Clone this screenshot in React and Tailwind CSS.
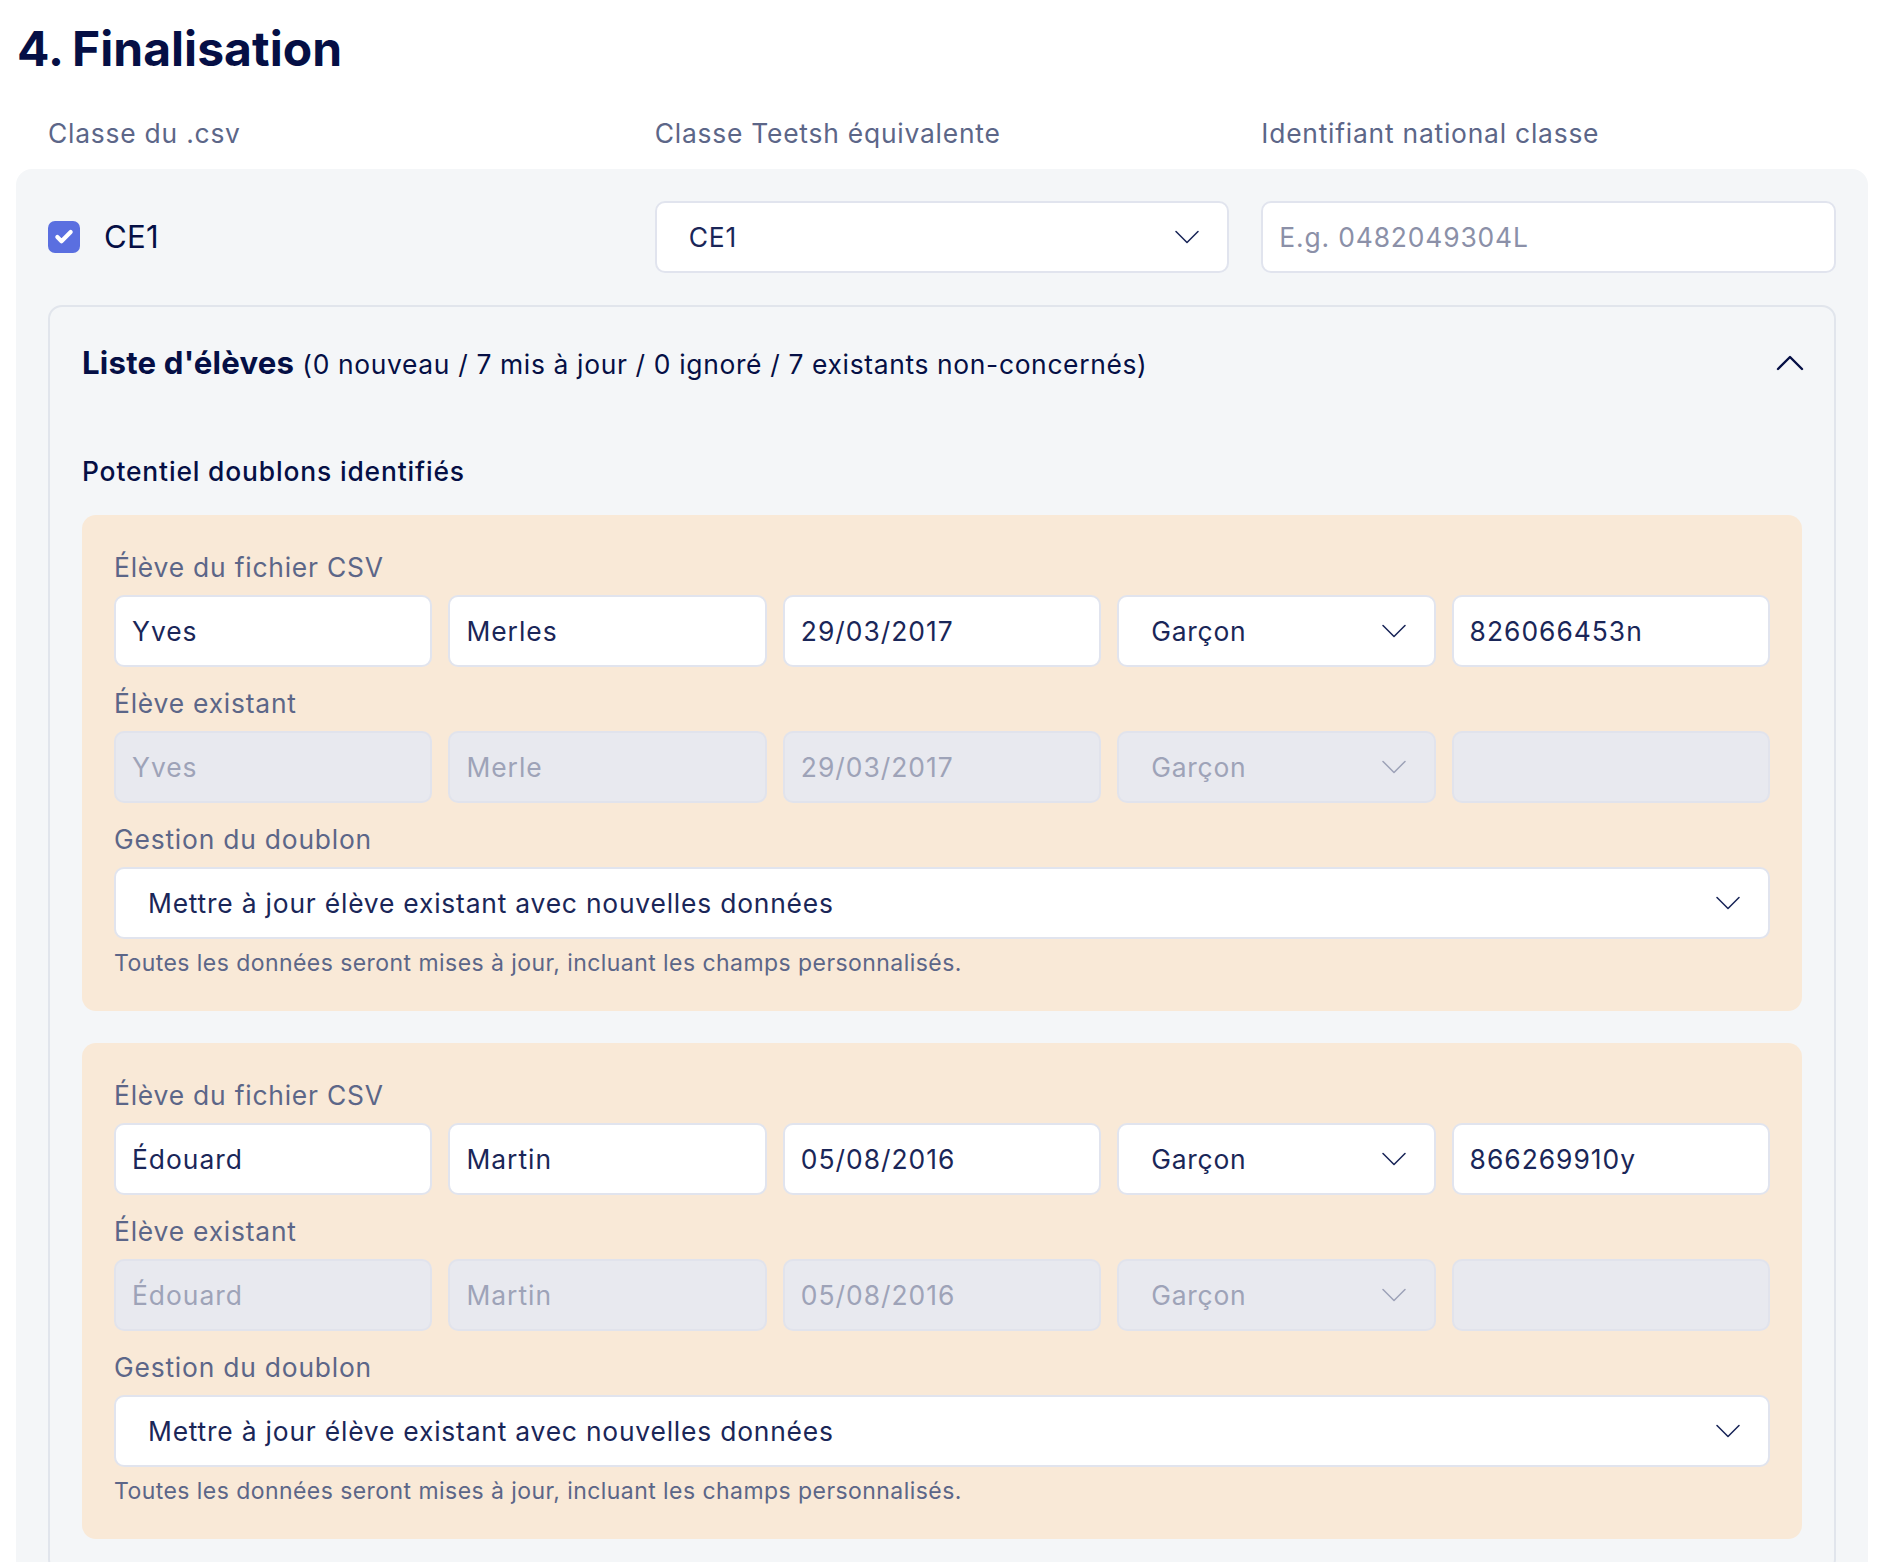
import { Check, ChevronDown, ChevronUp } from 'lucide-react';

const DOUBLONS = [
  {
    csv: ['Yves', 'Merles', '29/03/2017', 'Garçon', '826066453n'],
    existing: ['Yves', 'Merle', '29/03/2017', 'Garçon', ''],
  },
  {
    csv: ['Édouard', 'Martin', '05/08/2016', 'Garçon', '866269910y'],
    existing: ['Édouard', 'Martin', '05/08/2016', 'Garçon', ''],
  },
];

const ACTION = 'Mettre à jour élève existant avec nouvelles données';

function Label({ children }) {
  return <div className="mb-[8px] h-[40px] text-[26.4px] leading-[40px] tracking-[0.8px] text-[#5c6688]">{children}</div>;
}

function Field({ value, placeholder, disabled }) {
  return (
    <input
      readOnly
      disabled={disabled}
      value={value}
      placeholder={placeholder}
      className={
        'h-[72px] w-full min-w-0 rounded-[10px] border-2 px-[16px] text-[26.4px] tracking-[1px] outline-none placeholder:tracking-[0.85px] placeholder:text-[#8b90a8] ' +
        (disabled
          ? 'border-[#e1e3ec] bg-[#e8e9ef] text-[#9ea3b8]'
          : 'border-[#e1e4ee] bg-white text-[#1a2658]')
      }
    />
  );
}

function SelectBox({ value, disabled }) {
  return (
    <div className="relative">
      <select
        disabled={disabled}
        defaultValue={value}
        className={
          'h-[72px] w-full appearance-none rounded-[10px] border-2 pl-[32px] pr-[64px] pt-[2px] text-[26.4px] tracking-[0.8px] opacity-100 outline-none ' +
          (disabled
            ? 'border-[#e1e3ec] bg-[#e8e9ef] text-[#9ea3b8]'
            : 'border-[#e1e4ee] bg-white text-[#1a2658]')
        }
      >
        <option>{value}</option>
      </select>
      <ChevronDown
        strokeWidth={0.85}
        className={
          'pointer-events-none absolute right-[20px] top-1/2 h-[44px] w-[44px] -translate-y-1/2 ' +
          (disabled ? 'text-[#9ea3b8]' : 'text-[#1a2658]')
        }
      />
    </div>
  );
}

function FieldRow({ values, disabled }) {
  return (
    <div className="mb-[16px] grid grid-cols-5 gap-[16px]">
      <Field value={values[0]} disabled={disabled} />
      <Field value={values[1]} disabled={disabled} />
      <Field value={values[2]} disabled={disabled} />
      <SelectBox value={values[3]} disabled={disabled} />
      <Field value={values[4]} disabled={disabled} />
    </div>
  );
}

function DoublonCard({ doublon }) {
  return (
    <div className="mb-[32px] rounded-[14px] bg-[#f9e9d7] p-[32px]">
      <Label>Élève du fichier CSV</Label>
      <FieldRow values={doublon.csv} />
      <Label>Élève existant</Label>
      <FieldRow values={doublon.existing} disabled />
      <Label>Gestion du doublon</Label>
      <SelectBox value={ACTION} />
      <p className="mt-[8px] h-[32px] text-[23px] leading-[32px] tracking-[0.44px] text-[#5c6688]">
        Toutes les données seront mises à jour, incluant les champs personnalisés.
      </p>
    </div>
  );
}

export default function App() {
  return (
    <div className="h-[1562px] overflow-hidden bg-white font-['Inter',sans-serif] text-[#050f45]">
      <h1 className="flex h-[96px] items-center pl-[17px] pt-[2px] text-[48px] font-bold leading-none tracking-[0.05px] [word-spacing:-2px]">
        4. Finalisation
      </h1>

      <div className="mt-[17px] grid grid-cols-3 gap-[32px] px-[48px] text-[26.4px] leading-[40px] tracking-[0.78px] text-[#5c6688]">
        <div>Classe du .csv</div>
        <div>Classe Teetsh équivalente</div>
        <div>Identifiant national classe</div>
      </div>

      <div className="mx-[16px] mt-[16px] rounded-[16px] bg-[#f4f6f8] p-[32px]">
        <div className="grid grid-cols-3 items-center gap-[32px]">
          <label className="flex items-center gap-[24px] text-[31.2px] tracking-[0.2px]">
            <span className="flex h-[32px] w-[32px] items-center justify-center rounded-[7px] bg-[#5a6fe0]">
              <Check strokeWidth={5} className="h-[20px] w-[20px] text-white" />
            </span>
            CE1
          </label>
          <SelectBox value="CE1" />
          <Field value="" placeholder="E.g. 0482049304L" />
        </div>

        <div className="mt-[32px] rounded-[14px] border-2 border-[#e1e5ec] px-[32px]">
          <div className="flex h-[115px] items-center justify-between pb-[2px]">
            <p className="text-[26.4px] tracking-[0.66px] text-[#050f45]">
              <span className="text-[31.2px] font-bold tracking-[0.2px]">Liste d'élèves</span> (0 nouveau / 7 mis à jour / 0 ignoré / 7
              existants non-concernés)
            </p>
            <ChevronUp strokeWidth={1.2} className="mr-[-12px] mt-[-2px] h-[48px] w-[48px]" />
          </div>
          <h2 className="mt-[29px] mb-[24px] h-[40px] text-[26.4px] font-medium leading-[40px] tracking-[0.85px]">
            Potentiel doublons identifiés
          </h2>
          {DOUBLONS.map((d) => (
            <DoublonCard key={d.csv[0]} doublon={d} />
          ))}
        </div>
      </div>
    </div>
  );
}
